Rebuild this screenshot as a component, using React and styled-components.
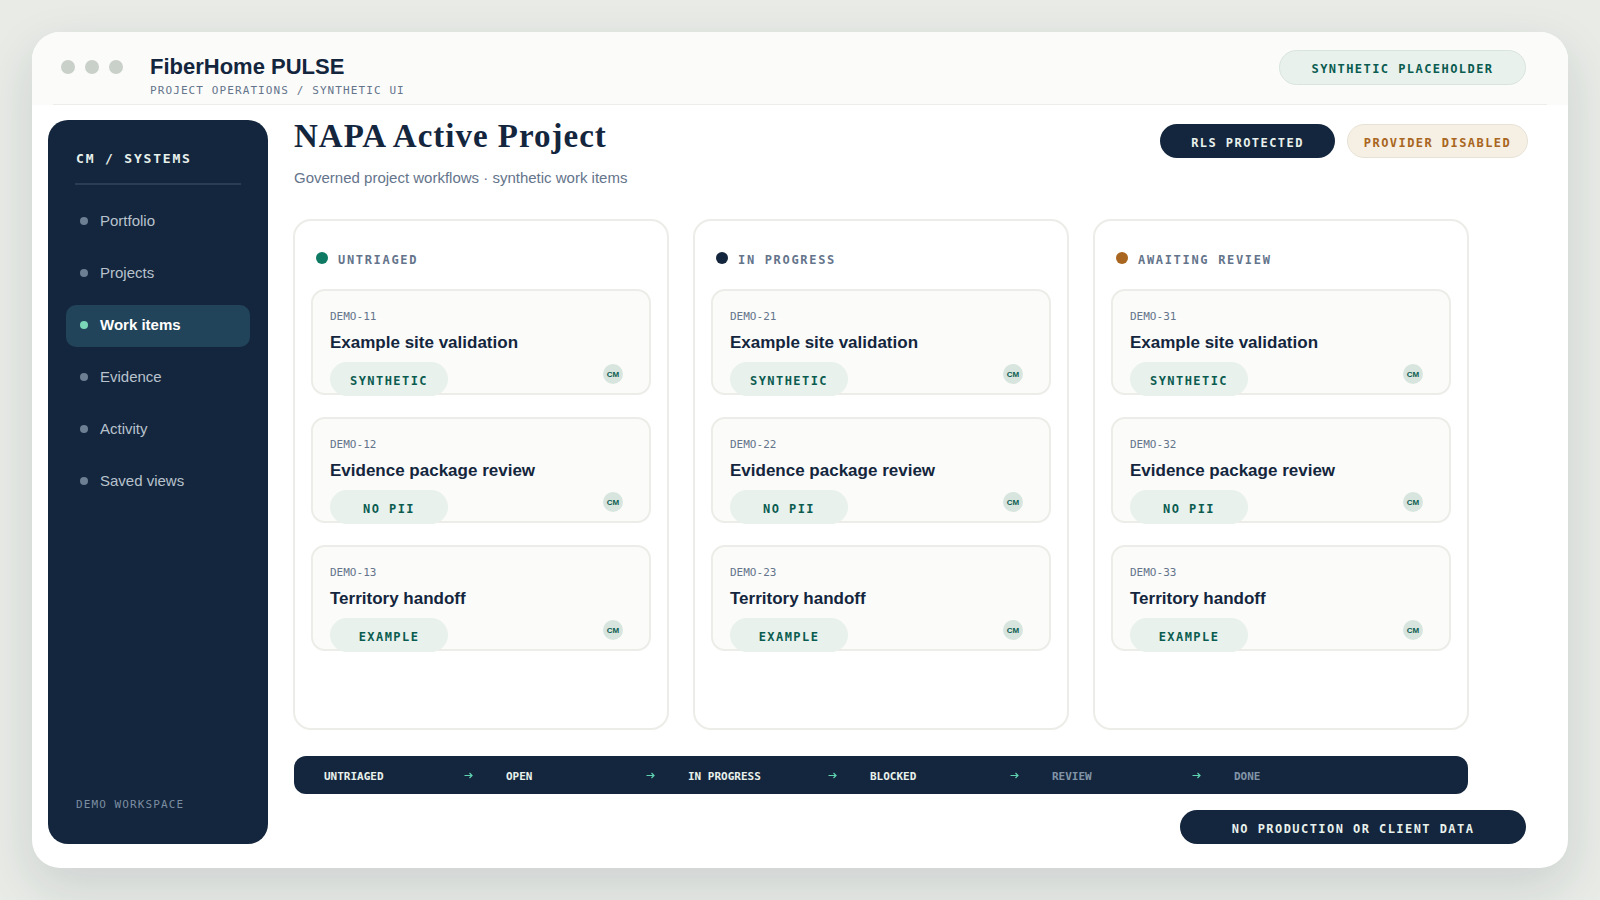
import React from "react";
import styled, { createGlobalStyle } from "styled-components";

const navItems = ["Portfolio", "Projects", "Work items", "Evidence", "Activity", "Saved views"];

const columns = [
  { name: "UNTRIAGED", color: "#0f7a63", base: 10 },
  { name: "IN PROGRESS", color: "#14263d", base: 20 },
  { name: "AWAITING REVIEW", color: "#a86620", base: 30 },
];

const cards = [
  { title: "Example site validation", tag: "SYNTHETIC" },
  { title: "Evidence package review", tag: "NO PII" },
  { title: "Territory handoff", tag: "EXAMPLE" },
];

const flowSteps = [
  { label: "UNTRIAGED" },
  { label: "OPEN" },
  { label: "IN PROGRESS" },
  { label: "BLOCKED" },
  { label: "REVIEW", dim: true },
  { label: "DONE", dim: true, last: true },
];

const App = () => {
  return (
    <>
      <GlobalStyle />
      <Page>
        <Frame>
          <Header>
            <Dots>
              <Dot />
              <Dot />
              <Dot />
            </Dots>
            <Brand>
              <BrandName>FiberHome PULSE</BrandName>
              <BrandSub>PROJECT OPERATIONS / SYNTHETIC UI</BrandSub>
            </Brand>
            <HeaderPill>SYNTHETIC PLACEHOLDER</HeaderPill>
          </Header>
          <Body>
            <Sidebar>
              <SideTitle>CM / SYSTEMS</SideTitle>
              <Nav>
                {navItems.map((item) => (
                  <NavItem key={item} $active={item === "Work items"}>
                    <NavDot $active={item === "Work items"} />
                    {item}
                  </NavItem>
                ))}
              </Nav>
              <SideFoot>DEMO WORKSPACE</SideFoot>
            </Sidebar>
            <Main>
              <TopRow>
                <div>
                  <PageTitle>NAPA Active Project</PageTitle>
                  <PageSub>Governed project workflows · synthetic work items</PageSub>
                </div>
                <Badges>
                  <DarkBadge>RLS PROTECTED</DarkBadge>
                  <WarnBadge>PROVIDER DISABLED</WarnBadge>
                </Badges>
              </TopRow>
              <Board>
                {columns.map((col) => (
                  <Column key={col.name}>
                    <ColumnHead>
                      <ColumnDot $color={col.color} />
                      {col.name}
                    </ColumnHead>
                    <CardList>
                      {cards.map((card, i) => (
                        <Card key={card.title}>
                          <CardId>DEMO-{col.base + i + 1}</CardId>
                          <CardTitle>{card.title}</CardTitle>
                          <CardFoot>
                            <Tag>{card.tag}</Tag>
                            <Avatar>CM</Avatar>
                          </CardFoot>
                        </Card>
                      ))}
                    </CardList>
                  </Column>
                ))}
              </Board>
              <FlowBar>
                {flowSteps.map((step) => (
                  <FlowStep key={step.label} $dim={step.dim}>
                    {step.label}
                    {!step.last && (
                      <FlowArrow viewBox="0 0 9 7" aria-hidden="true">
                        <path d="M0.5 3.5H8M5.5 1L8 3.5L5.5 6" />
                      </FlowArrow>
                    )}
                  </FlowStep>
                ))}
              </FlowBar>
              <BottomRow>
                <NoticePill>NO PRODUCTION OR CLIENT DATA</NoticePill>
              </BottomRow>
            </Main>
          </Body>
        </Frame>
      </Page>
    </>
  );
};

export default App;

const MONO = `"DejaVu Sans Mono", monospace`;
const SANS = `"Liberation Sans", Arial, sans-serif`;

const GlobalStyle = createGlobalStyle`
  html, body {
    margin: 0;
    padding: 0;
    background: #e8ebe6;
  }
  * {
    box-sizing: border-box;
  }
`;

const Page = styled.div`
  width: 1600px;
  height: 900px;
  padding: 32px;
  overflow: hidden;
  background: #e8ebe6;
  font-family: ${SANS};
`;

const Frame = styled.div`
  width: 1536px;
  height: 836px;
  display: flex;
  flex-direction: column;
  background: #ffffff;
  border-radius: 28px;
  overflow: hidden;
  box-shadow: 0 18px 50px rgba(20, 38, 61, 0.13);
`;

const Header = styled.header`
  position: relative;
  height: 73px;
  flex: none;
  display: flex;
  align-items: center;
  padding: 0 42px 4px 29px;
  background: #fbfbf9;

  &::after {
    content: "";
    position: absolute;
    left: 21px;
    right: 21px;
    bottom: 0;
    height: 1px;
    background: #ecece8;
  }
`;

const Dots = styled.div`
  display: flex;
  gap: 10px;
  margin-right: 27px;
`;

const Dot = styled.span`
  width: 14px;
  height: 14px;
  border-radius: 50%;
  background: #c9cfc9;
`;

const Brand = styled.div`
  flex: 1;
  display: flex;
  flex-direction: column;
  gap: 4px;
  margin-top: 17px;
`;

const BrandName = styled.div`
  font-size: 22px;
  line-height: 26px;
  font-weight: 700;
  color: #14263d;
`;

const BrandSub = styled.div`
  font-family: ${MONO};
  font-size: 11px;
  line-height: 13px;
  letter-spacing: 0.1em;
  color: #64748b;
`;

const Pill = styled.div`
  height: 34px;
  display: flex;
  align-items: center;
  justify-content: center;
  padding-top: 3px;
  border-radius: 17px;
  font-family: ${MONO};
  font-size: 12px;
  font-weight: 700;
  letter-spacing: 0.12em;
  white-space: nowrap;
`;

const HeaderPill = styled(Pill)`
  width: 247px;
  height: 35px;
  margin-top: 2px;
  border-radius: 18px;
  border: 1px solid #d9e4dd;
  background: #e8f1ec;
  color: #0b5c50;
`;

const Body = styled.div`
  flex: 1;
  display: flex;
  gap: 26px;
  padding: 15px 42px 24px 16px;
  min-height: 0;
`;

const Sidebar = styled.aside`
  width: 220px;
  flex: none;
  display: flex;
  flex-direction: column;
  padding: 30px 18px 33px;
  border-radius: 20px;
  background: #14263d;
`;

const SideTitle = styled.div`
  margin: 0 9px 16px 9px;
  padding: 0 0 16px 1px;
  border-bottom: 2px solid #2b3d53;
  font-family: ${MONO};
  font-size: 13px;
  line-height: 17px;
  font-weight: 700;
  letter-spacing: 0.14em;
  color: #e8f1ec;
`;

const Nav = styled.nav`
  flex: 1;
  display: flex;
  flex-direction: column;
  gap: 10px;
`;

const NavItem = styled.div`
  height: 42px;
  display: flex;
  align-items: center;
  gap: 12px;
  padding: 0 14px 4px;
  border-radius: 10px;
  font-size: 15px;
  font-weight: ${(p) => (p.$active ? 700 : 400)};
  color: ${(p) => (p.$active ? "#ffffff" : "#b8c2cd")};
  background: ${(p) => (p.$active ? "#21445a" : "transparent")};
`;

const NavDot = styled.span`
  width: 8px;
  height: 8px;
  flex: none;
  margin-top: 2px;
  border-radius: 50%;
  background: ${(p) => (p.$active ? "#7bd6b8" : "#6d7f92")};
`;

const SideFoot = styled.div`
  margin-left: 10px;
  font-family: ${MONO};
  font-size: 11px;
  line-height: 13px;
  letter-spacing: 0.1em;
  color: #7b8da1;
`;

const Main = styled.main`
  flex: 1;
  min-width: 0;
  display: flex;
  flex-direction: column;
`;

const TopRow = styled.div`
  height: 99px;
  flex: none;
  display: flex;
  justify-content: space-between;
  align-items: flex-start;
`;

const PageTitle = styled.h1`
  margin: 0;
  font-family: "Liberation Serif", "Times New Roman", serif;
  font-size: 33px;
  line-height: 32px;
  font-weight: 700;
  letter-spacing: 1px;
  color: #14263d;
`;

const PageSub = styled.p`
  margin: 17px 0 0;
  font-size: 15px;
  line-height: 18px;
  color: #64748b;
`;

const Badges = styled.div`
  display: flex;
  gap: 12px;
  margin: 4px -2px 0 0;
`;

const DarkBadge = styled(Pill)`
  width: 175px;
  background: #14263d;
  color: #e8f1ec;
`;

const WarnBadge = styled(Pill)`
  width: 181px;
  border: 1px solid #e6e2d6;
  background: #f6efe4;
  color: #a86620;
`;

const Board = styled.div`
  width: 1176px;
  height: 511px;
  flex: none;
  display: grid;
  grid-template-columns: repeat(3, 376px);
  gap: 24px;
  margin-left: -1px;
`;

const Column = styled.section`
  display: flex;
  flex-direction: column;
  padding: 31px 16px 0;
  border: 2px solid #ecece8;
  border-radius: 18px;
  background: #ffffff;
`;

const ColumnHead = styled.div`
  height: 16px;
  display: flex;
  align-items: center;
  gap: 10px;
  margin: 0 0 21px 5px;
  font-family: ${MONO};
  font-size: 12px;
  font-weight: 700;
  letter-spacing: 0.14em;
  color: #64748b;
`;

const ColumnDot = styled.span`
  width: 12px;
  height: 12px;
  margin-top: -4px;
  border-radius: 50%;
  background: ${(p) => p.$color};
`;

const CardList = styled.div`
  display: flex;
  flex-direction: column;
  gap: 22px;
`;

const Card = styled.article`
  height: 106px;
  display: flex;
  flex-direction: column;
  padding: 19px 26px 0 17px;
  border: 2px solid #ecece8;
  border-radius: 14px;
  background: #fbfbf9;
`;

const CardId = styled.div`
  font-family: ${MONO};
  font-size: 11px;
  line-height: 13px;
  color: #64748b;
`;

const CardTitle = styled.div`
  margin-top: 9px;
  font-size: 17px;
  line-height: 22px;
  font-weight: 700;
  color: #14263d;
`;

const CardFoot = styled.div`
  display: flex;
  justify-content: space-between;
  align-items: flex-start;
  margin-top: 8px;
`;

const Tag = styled(Pill)`
  width: 118px;
  background: #e8f1ec;
  color: #0b5c50;
`;

const Avatar = styled.span`
  width: 20px;
  height: 20px;
  margin-top: 2px;
  display: flex;
  align-items: center;
  justify-content: center;
  border-radius: 50%;
  background: #d8e5df;
  font-size: 8px;
  font-weight: 700;
  color: #0b5c50;
`;

const FlowBar = styled.div`
  width: 1174px;
  height: 38px;
  flex: none;
  display: flex;
  align-items: center;
  margin-top: 26px;
  padding: 2px 0 0 30px;
  border-radius: 12px;
  background: #14263d;
`;

const FlowStep = styled.div`
  width: 182px;
  flex: none;
  display: flex;
  justify-content: space-between;
  align-items: center;
  padding-right: 33px;
  font-family: ${MONO};
  font-size: 11px;
  font-weight: 700;
  color: ${(p) => (p.$dim ? "#8295a8" : "#e8f1ec")};
`;

const FlowArrow = styled.svg`
  width: 9px;
  height: 7px;
  margin-top: -2px;
  fill: none;
  stroke: #5fd3b0;
  stroke-width: 1.2;
`;

const BottomRow = styled.div`
  display: flex;
  justify-content: flex-end;
  margin-top: 16px;
`;

const NoticePill = styled(Pill)`
  width: 346px;
  background: #14263d;
  color: #e8f1ec;
`;
